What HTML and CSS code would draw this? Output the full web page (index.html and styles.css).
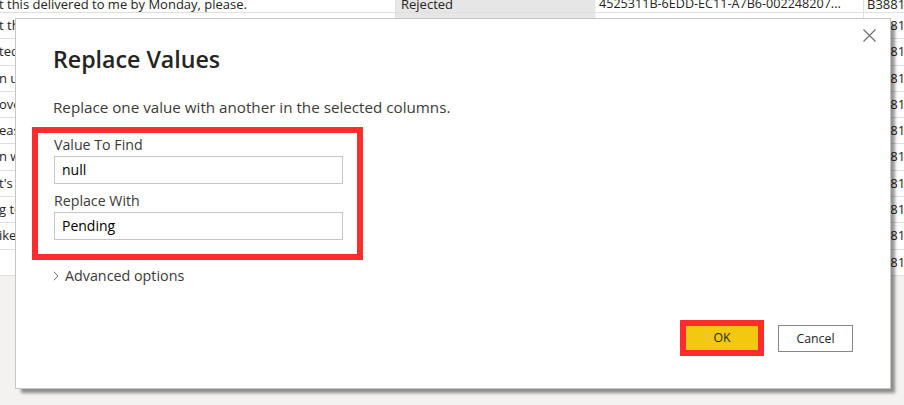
FILE: index.html
```html
<!DOCTYPE html>
<html lang="en">
<head>
<meta charset="utf-8">
<title>Replace Values</title>
<link rel="stylesheet" href="styles.css">
</head>
<body>
<div class="table">
  <div class="row row-first">
    <div class="cell c1">t this delivered to me by Monday, please.</div>
    <div class="cell c2">Rejected</div>
    <div class="cell c3">4525311B-6EDD-EC11-A7B6-002248207...</div>
    <div class="cell c4">B3881</div>
  </div>
  <div class="row"><div class="cell c1">t th</div><div class="cell c2"></div><div class="cell c3"></div><div class="cell c4">B3881</div></div>
  <div class="row"><div class="cell c1">ted</div><div class="cell c2"></div><div class="cell c3"></div><div class="cell c4">B3881</div></div>
  <div class="row"><div class="cell c1">n u</div><div class="cell c2"></div><div class="cell c3"></div><div class="cell c4">B3881</div></div>
  <div class="row"><div class="cell c1">ove</div><div class="cell c2"></div><div class="cell c3"></div><div class="cell c4">B3881</div></div>
  <div class="row"><div class="cell c1">eas</div><div class="cell c2"></div><div class="cell c3"></div><div class="cell c4">B3881</div></div>
  <div class="row"><div class="cell c1">n w</div><div class="cell c2"></div><div class="cell c3"></div><div class="cell c4">B3881</div></div>
  <div class="row"><div class="cell c1">t's f</div><div class="cell c2"></div><div class="cell c3"></div><div class="cell c4">B3881</div></div>
  <div class="row"><div class="cell c1">g to</div><div class="cell c2"></div><div class="cell c3"></div><div class="cell c4">B3881</div></div>
  <div class="row"><div class="cell c1">ike</div><div class="cell c2"></div><div class="cell c3"></div><div class="cell c4">B3881</div></div>
  <div class="row"><div class="cell c1"></div><div class="cell c2"></div><div class="cell c3"></div><div class="cell c4">B3881</div></div>
</div>

<div class="dialog" role="dialog" aria-label="Replace Values">
  <button class="close" type="button" aria-label="Close">
    <svg width="13" height="13" viewBox="0 0 13 13"><path d="M0.5 0.5 L12.5 12.5 M12.5 0.5 L0.5 12.5" stroke="#6b6b6b" stroke-width="1.1" fill="none"/></svg>
  </button>
  <h1 class="title">Replace Values</h1>
  <p class="subtitle">Replace one value with another in the selected columns.</p>
  <div class="fields">
    <label class="label">Value To Find</label>
    <div class="input">null</div>
    <label class="label label-second">Replace With</label>
    <div class="input">Pending</div>
  </div>
  <div class="advanced">
    <svg class="chev" width="6" height="10" viewBox="0 0 6 10"><path d="M0.8 0.8 L5 5 L0.8 9.2" stroke="#6b6b6b" stroke-width="1" fill="none"/></svg>
    <span>Advanced options</span>
  </div>
  <div class="footer">
    <div class="ok-mark"><button class="btn ok" type="button">OK</button></div>
    <button class="btn cancel" type="button">Cancel</button>
  </div>
</div>
</body>
</html>
```
FILE: styles.css
```css
html, body {
  margin: 0;
  padding: 0;
  overflow: hidden;
}
body {
  width: 904px;
  height: 405px;
  position: relative;
  background: #f3f2f1;
  font-family: "Open Sans", "Noto Sans", sans-serif;
  color: #252423;
}

/* background data grid */
.table {
  width: 904px;
  font-size: 13px;
  color: #252423;
}
.row {
  display: grid;
  grid-template-columns: 396px 200px 268px 40px;
  height: 26.3px;
  box-sizing: border-box;
  border-bottom: 1px solid #e1dfdd;
  background: #ffffff;
}
.row-first {
  height: 13px;
}
.cell {
  white-space: nowrap;
  overflow: hidden;
  border-right: 1px solid #e1dfdd;
  line-height: 25.3px;
}
.row-first .cell {
  line-height: 8px;
  overflow: visible;
}
.c1 {
  text-indent: -1px;
}
.c2 {
  background: #e6e6e6;
  padding-left: 5px;
  border-right-color: #f4f4f4;
}
.c3 {
  padding-left: 3px;
  font-size: 12.6px;
}
.c4 {
  padding-left: 3px;
  border-right: 0;
}
.row-first .c4 {
  overflow: hidden;
}

/* dialog */
.dialog {
  position: absolute;
  left: 15px;
  top: 18px;
  width: 876px;
  height: 371px;
  box-sizing: border-box;
  background: #ffffff;
  border: 1px solid #c8c6c4;
  box-shadow: 5px 5px 3px -1px rgba(0, 0, 0, 0.42);
  display: flex;
  flex-direction: column;
  padding: 0 16px 32px;
}
.close {
  position: absolute;
  top: 10px;
  right: 14px;
  width: 13px;
  height: 13px;
  padding: 0;
  border: 0;
  background: transparent;
  display: block;
}
.close svg {
  display: block;
}
.title {
  margin: 25px 0 0 21px;
  font-size: 23.2px;
  font-weight: 600;
  line-height: 30px;
  color: #252423;
}
.subtitle {
  margin: 23px 0 0 21px;
  font-size: 15.2px;
  line-height: 20px;
  color: #3b3a39;
}
.fields {
  margin-top: 10px;
  width: 331px;
  box-sizing: border-box;
  border: 6px solid #fe2c2c;
  padding: 2px 14px 14px 16px;
  display: flex;
  flex-direction: column;
}
.label {
  font-size: 14.2px;
  line-height: 19px;
  color: #3b3a39;
}
.label-second {
  margin-top: 7px;
}
.input {
  margin-top: 2px;
  height: 28px;
  box-sizing: border-box;
  border: 1px solid #c8c6c4;
  padding-left: 7px;
  font-size: 14px;
  line-height: 26px;
  color: #000000;
}
.advanced {
  margin: 6px 0 0 21px;
  display: flex;
  align-items: center;
  font-size: 14.3px;
  line-height: 19px;
  color: #3b3a39;
}
.chev {
  display: block;
  margin: 1px 6px 0 0;
}
.footer {
  margin-top: auto;
  display: flex;
  justify-content: flex-end;
  align-items: center;
  gap: 14px;
  padding-right: 21px;
}
.ok-mark {
  border: 6px solid #fe2c2c;
  display: flex;
}
.btn {
  font-family: "Open Sans", "Noto Sans", sans-serif;
  font-size: 12.3px;
  color: #252423;
  padding: 0;
  margin: 0;
  box-sizing: border-box;
}
.ok {
  width: 72px;
  height: 24px;
  border: 0;
  background: #f2c811;
  line-height: 24px;
}
.cancel {
  width: 75px;
  height: 27px;
  border: 1px solid #8a8886;
  background: #ffffff;
  line-height: 25px;
}
```
